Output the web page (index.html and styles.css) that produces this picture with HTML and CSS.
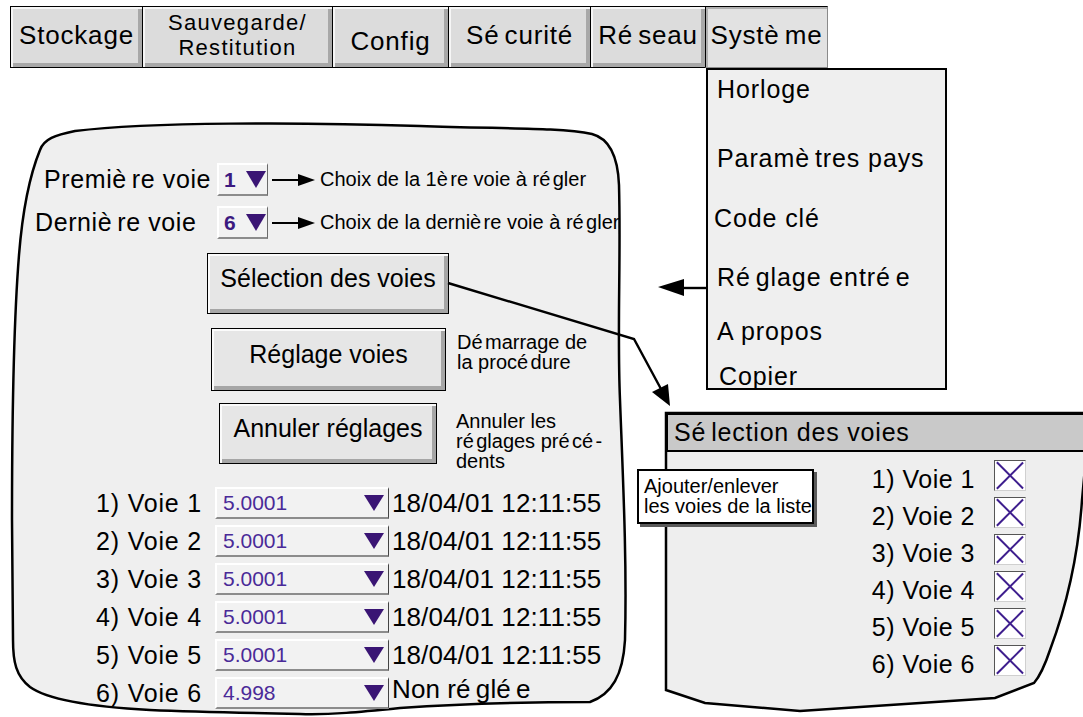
FILE: index.html
```html
<!DOCTYPE html>
<html lang="fr">
<head>
<meta charset="utf-8">
<title>Système - Réglage entrée</title>
<link rel="stylesheet" href="styles.css">
</head>
<body>
<div class="canvas">
  <nav class="tabs">
    <div class="tab tab-stockage">Stockage</div>
    <div class="tab tab-sauve"><span class="line">Sauvegarde/</span><span class="line">Restitution</span></div>
    <div class="tab tab-config">Config</div>
    <div class="tab tab-secu">S<span class="g">é</span>curité</div>
    <div class="tab tab-reseau">R<span class="g">é</span>seau</div>
    <div class="tab tab-systeme">Syst<span class="g">è</span>me</div>
  </nav>

  <section class="panel-left">
    <svg class="shape" viewBox="8 124 622 593" width="622" height="593">
      <path d="M40 150 C44 139 55 135 75 131 C150 122 300 122 420 126 C500 129 560 127 592 134 C611 139 618 160 619 185 C621 260 617 330 620 400 C623 480 627 560 625 640 C623 675 612 694 590 702 C540 702 460 704 400 708 C360 712 330 715 300 714 C250 713 200 712 150 710 C95 707 48 700 30 687 C16 676 13 662 13 640 L12 520 C12 430 13 330 19 255 C23 205 31 172 40 150 Z"/>
    </svg>
    <div class="panel-content">
      <div class="pick-row pick-first">
        <span class="pick-label">Premi<span class="g">è</span>re voie</span>
        <span class="pick"><b>1</b><i class="tri"></i></span>
        <svg class="mini-arrow" width="48" height="14" viewBox="0 0 48 14"><line x1="4" y1="7" x2="32" y2="7"/><polygon points="30,1 47,7 30,13"/></svg>
        <span class="note">Choix de la 1<span class="g">è</span>re voie à r<span class="g">é</span>gler</span>
      </div>
      <div class="pick-row pick-last">
        <span class="pick-label">Derni<span class="g">è</span>re voie</span>
        <span class="pick"><b>6</b><i class="tri"></i></span>
        <svg class="mini-arrow" width="48" height="14" viewBox="0 0 48 14"><line x1="4" y1="7" x2="32" y2="7"/><polygon points="30,1 47,7 30,13"/></svg>
        <span class="note">Choix de la derni<span class="g">è</span>re voie à r<span class="g">é</span>gler</span>
      </div>

      <div class="action-row action-select">
        <div class="btn btn-select">Sélection des voies</div>
      </div>
      <div class="action-row action-start">
        <div class="btn btn-start">Réglage voies</div>
        <p class="side-note">D<span class="g">é</span>marrage de<br>la proc<span class="g">é</span>dure</p>
      </div>
      <div class="action-row action-cancel">
        <div class="btn btn-cancel">Annuler réglages</div>
        <p class="side-note">Annuler les<br>r<span class="g">é</span>glages pr<span class="g">é</span>c<span class="g">é</span>-<br>dents</p>
      </div>

      <div class="channels">
        <div class="ch-row"><span class="ch-label">1) Voie 1</span><span class="ch-box"><span class="ch-val">5.0001</span><i class="tri"></i></span><span class="ch-date">18/04/01 12:11:55</span></div>
        <div class="ch-row"><span class="ch-label">2) Voie 2</span><span class="ch-box"><span class="ch-val">5.0001</span><i class="tri"></i></span><span class="ch-date">18/04/01 12:11:55</span></div>
        <div class="ch-row"><span class="ch-label">3) Voie 3</span><span class="ch-box"><span class="ch-val">5.0001</span><i class="tri"></i></span><span class="ch-date">18/04/01 12:11:55</span></div>
        <div class="ch-row"><span class="ch-label">4) Voie 4</span><span class="ch-box"><span class="ch-val">5.0001</span><i class="tri"></i></span><span class="ch-date">18/04/01 12:11:55</span></div>
        <div class="ch-row"><span class="ch-label">5) Voie 5</span><span class="ch-box"><span class="ch-val">5.0001</span><i class="tri"></i></span><span class="ch-date">18/04/01 12:11:55</span></div>
        <div class="ch-row"><span class="ch-label">6) Voie 6</span><span class="ch-box"><span class="ch-val">4.998</span><i class="tri"></i></span><span class="ch-date ch-none">Non r<span class="g">é</span>gl<span class="g">é</span>e</span></div>
      </div>
    </div>
  </section>

  <section class="panel-right">
    <svg class="shape" viewBox="666 413 417 304" width="417" height="304">
      <path d="M666 413 L1090 413 L1082 500 C1078 560 1065 610 1050 650 C1045 665 1040 676 1034 683 L995 698 L800 711 L705 703 L666 690 Z"/>
    </svg>
    <header class="sel-head">S<span class="g">é</span>lection des voies</header>
    <div class="sel-list">
      <div class="sel-row"><span class="sel-label">1) Voie 1</span><span class="check"></span></div>
      <div class="sel-row"><span class="sel-label">2) Voie 2</span><span class="check"></span></div>
      <div class="sel-row"><span class="sel-label">3) Voie 3</span><span class="check"></span></div>
      <div class="sel-row"><span class="sel-label">4) Voie 4</span><span class="check"></span></div>
      <div class="sel-row"><span class="sel-label">5) Voie 5</span><span class="check"></span></div>
      <div class="sel-row"><span class="sel-label">6) Voie 6</span><span class="check"></span></div>
    </div>
  </section>

  <div class="tooltip">Ajouter/enlever<br>les voies de la liste</div>

  <ul class="menu">
    <li class="m-horloge">Horloge</li>
    <li class="m-pays">Param<span class="g">è</span>tres pays</li>
    <li class="m-code">Code clé</li>
    <li class="m-reglage">R<span class="g">é</span>glage entr<span class="g">é</span>e</li>
    <li class="m-propos">A propos</li>
    <li class="m-copier">Copier</li>
  </ul>

  <svg class="arrows" viewBox="0 0 1083 717" width="1083" height="717">
    <polyline points="448,283 634,339 661,389"/>
    <polygon points="652,392 670,406 668,384"/>
    <line x1="682" y1="288" x2="706" y2="288"/>
    <polygon points="658,287 684,279 684,296"/>
  </svg>
</div>
</body>
</html>
```

FILE: styles.css
```css
* { box-sizing: border-box; }

html, body {
  margin: 0;
  padding: 0;
  background: #fff;
}

body {
  font-family: "Liberation Sans", Arial, Helvetica, sans-serif;
  color: #000;
  font-size: 25px;
}

.canvas {
  position: relative;
  width: 1083px;
  height: 717px;
  overflow: hidden;
}

.g { margin-right: 0.2em; }

/* ---------- tabs ---------- */
.tabs {
  display: flex;
  padding: 6px 0 0 10px;
}

.tab {
  height: 62px;
  margin-left: -1px;
  border: 1px solid #000;
  background: #dcdcdc;
  box-shadow: inset 2px 2px 0 #f6f6f6, inset -4px -4px 0 #a8a8a8;
  display: flex;
  align-items: center;
  justify-content: center;
  text-align: center;
  font-size: 26px;
  line-height: 28px;
  letter-spacing: 0.8px;
  padding-bottom: 5px;
}

.tab-stockage { width: 133px; margin-left: 0; }
.tab-sauve {
  width: 191px;
  flex-direction: column;
  font-size: 22px;
  line-height: 25px;
  letter-spacing: 1.3px;
  padding-bottom: 4px;
}
.tab-sauve .line { display: block; }
.tab-config { width: 117px; padding: 7px 0 0; }
.tab-secu { width: 143px; }
.tab-reseau { width: 116px; }
.tab-systeme {
  width: 123px;
  background: #e2e2e2;
  border-color: #000 #8a8a8a #8a8a8a #000;
  box-shadow: inset 2px 2px 0 #b0b0b0;
}

/* ---------- dropdown menu ---------- */
.menu {
  position: absolute;
  left: 706px;
  top: 68px;
  width: 241px;
  height: 322px;
  margin: 0;
  padding: 4px 0 0 9px;
  list-style: none;
  background: #efefef;
  border: 2px solid #000;
  font-size: 25px;
  letter-spacing: 0.9px;
}

.menu li { line-height: 30px; height: 30px; }
.menu .m-pays { margin-top: 39px; }
.menu .m-code { margin-top: 30px; margin-left: -3px; }
.menu .m-reglage { margin-top: 29px; }
.menu .m-propos { margin-top: 24px; }
.menu .m-copier { margin-top: 15px; margin-left: 2px; }

/* ---------- left panel ---------- */
.panel-left {
  position: absolute;
  left: 8px;
  top: 124px;
  width: 622px;
  height: 593px;
}

.shape {
  position: absolute;
  left: 0;
  top: 0;
  overflow: visible;
}

.shape path {
  fill: #efefef;
  stroke: #000;
  stroke-width: 2.5;
}

.panel-content {
  position: relative;
  padding-top: 39px;
  display: flex;
  flex-direction: column;
}

.pick-row {
  display: flex;
  align-items: center;
  height: 33px;
}

.pick-first .pick-label { margin-left: 36px; width: 173px; }
.pick-last { margin-top: 10px; }
.pick-last .pick-label { margin-left: 27px; width: 182px; }

.pick-label { white-space: nowrap; letter-spacing: 0.6px; }

.pick {
  width: 51px;
  height: 33px;
  display: flex;
  align-items: center;
  padding-left: 5px;
  background: #f2f2f2;
  border-top: 2px solid #fff;
  border-left: 2px solid #fff;
  border-bottom: 2px solid #8c8c8c;
  border-right: 1px solid #6a6a6a;
}

.pick b {
  color: #3c1a80;
  font-size: 21px;
  width: 22px;
}

.tri {
  display: block;
  width: 0;
  height: 0;
  border-left: 10px solid transparent;
  border-right: 10px solid transparent;
  border-top: 17px solid #3a1574;
}

.mini-arrow line { stroke: #000; stroke-width: 2; }
.mini-arrow polygon { fill: #000; }

.note {
  margin-left: 4px;
  font-size: 20px;
  white-space: nowrap;
}

.note .g { margin-right: 0.12em; }

/* buttons */
.action-row {
  display: flex;
  align-items: flex-start;
}

.action-select { margin-top: 14px; }
.action-start { margin-top: 14px; }
.action-cancel { margin-top: 12px; }

.btn {
  display: flex;
  align-items: center;
  justify-content: center;
  border: 1px solid #000;
  background: #e6e6e6;
  box-shadow: inset 2px 2px 0 #fbfbfb, inset -4px -4px 0 #a6a6a6;
  padding-bottom: 10px;
  font-size: 25px;
  white-space: nowrap;
}

.btn-select { margin-left: 199px; width: 242px; height: 61px; }
.btn-start { margin-left: 203px; width: 235px; height: 63px; }
.btn-cancel { margin-left: 211px; width: 218px; height: 61px; }

.side-note {
  margin: 0;
  font-size: 20px;
  line-height: 20px;
}

.side-note .g { margin-right: 0.12em; }

.action-start .side-note { margin-left: 11px; padding-top: 4px; }
.action-cancel .side-note { margin-left: 19px; padding-top: 8px; }

/* channel list */
.channels {
  margin-top: 16px;
  display: flex;
  flex-direction: column;
  gap: 6px;
}

.ch-row {
  display: flex;
  align-items: center;
  height: 32px;
}

.ch-label {
  width: 194px;
  text-align: right;
  letter-spacing: 0.8px;
  white-space: nowrap;
}

.ch-box {
  margin-left: 13px;
  width: 174px;
  height: 32px;
  display: flex;
  align-items: center;
  justify-content: space-between;
  padding: 0 4px 0 6px;
  background: #f2f2f2;
  border-top: 2px solid #fff;
  border-left: 2px solid #fff;
  border-bottom: 2px solid #8c8c8c;
  border-right: 1px solid #444;
}

.ch-val {
  color: #4a2a98;
  font-size: 21px;
}

.ch-box .tri {
  border-left-width: 10px;
  border-right-width: 10px;
  border-top-width: 16px;
}

.ch-date {
  margin-left: 3px;
  font-size: 26px;
  letter-spacing: 0.1px;
  white-space: nowrap;
}

.ch-none { align-self: flex-start; margin-top: -3px; }

/* ---------- right panel ---------- */
.panel-right {
  position: absolute;
  left: 666px;
  top: 413px;
  width: 417px;
  height: 304px;
}

.panel-right .shape path { fill: #eeeeee; }

.sel-head {
  position: relative;
  height: 39px;
  width: 430px;
  background: #c9c9c9;
  border: 2px solid #000;
  border-right: 0;
  padding-left: 6px;
  line-height: 35px;
  font-size: 25px;
  letter-spacing: 0.8px;
}

.sel-list {
  position: relative;
  padding-top: 8px;
  display: flex;
  flex-direction: column;
  gap: 6px;
}

.sel-row {
  display: flex;
  align-items: center;
  height: 31px;
}

.sel-label {
  margin-left: 199px;
  width: 110px;
  text-align: right;
  padding-top: 8px;
  letter-spacing: 0.5px;
  white-space: nowrap;
}

.check {
  position: relative;
  margin-left: 19px;
  width: 32px;
  height: 31px;
  background: #fff;
  border-top: 1px solid #555;
  border-left: 1px solid #555;
  border-right: 1px solid #d0d0d0;
  border-bottom: 1px solid #d0d0d0;
}

.check::before,
.check::after {
  content: "";
  position: absolute;
  left: 14px;
  top: -4px;
  width: 1.6px;
  height: 37px;
  background: #3e1e8e;
  transform: rotate(45deg);
}

.check::after { transform: rotate(-45deg); }

/* ---------- tooltip ---------- */
.tooltip {
  position: absolute;
  left: 637px;
  top: 469px;
  width: 177px;
  height: 55px;
  background: #fff;
  border: 2px solid #000;
  box-shadow: 3px 3px 0 #5a5a5a;
  padding: 5px 0 0 5px;
  font-size: 20px;
  line-height: 20px;
  white-space: nowrap;
}

/* ---------- arrows ---------- */
.arrows {
  position: absolute;
  left: 0;
  top: 0;
  pointer-events: none;
}

.arrows polyline,
.arrows line {
  fill: none;
  stroke: #000;
  stroke-width: 2.4;
}

.arrows polygon { fill: #000; }
```
